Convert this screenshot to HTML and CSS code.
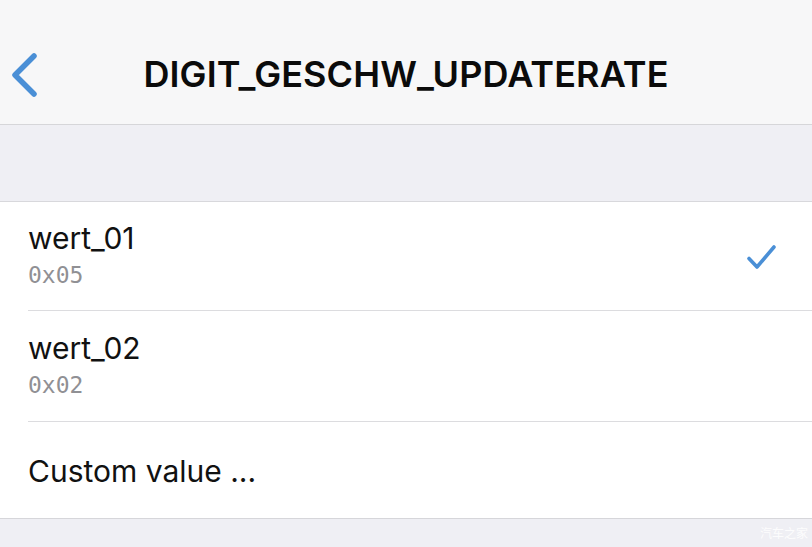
FILE: index.html
```html
<!DOCTYPE html>
<html>
<head>
<meta charset="utf-8">
<link rel="stylesheet" href="styles.css">
</head>
<body>
<div class="screen">
  <header class="navbar">
    <svg class="back" width="30" height="48" viewBox="0 0 30 48"><path d="M24 5 L5 24 L24 43" fill="none" stroke="#4a8fd6" stroke-width="5.5" stroke-linecap="round" stroke-linejoin="round"/></svg>
    <h1 class="title">DIGIT_GESCHW_UPDATERATE</h1>
  </header>
  <div class="gap"></div>
  <ul class="list">
    <li class="row">
      <div class="texts">
        <div class="name">wert_01</div>
        <div class="code">0x05</div>
      </div>
      <svg class="check" width="32" height="28" viewBox="0 0 32 28"><path d="M3 14.5 L11 23 L28 3" fill="none" stroke="#4a8fd6" stroke-width="3.6" stroke-linecap="round" stroke-linejoin="round"/></svg>
    </li>
    <li class="row">
      <div class="texts">
        <div class="name">wert_02</div>
        <div class="code">0x02</div>
      </div>
    </li>
    <li class="row custom">
      <div class="name">Custom value ...</div>
    </li>
  </ul>
  <div class="footer"><span class="wm">汽车之家</span></div>
</div>
</body>
</html>
```
FILE: styles.css
```css
html, body { margin: 0; padding: 0; }
body { width: 812px; height: 547px; overflow: hidden; background: #efeff4; font-family: Inter, "Noto Sans", sans-serif; }
.screen { display: flex; flex-direction: column; height: 547px; }
.navbar { position: relative; height: 124px; background: #f7f7f8; border-bottom: 1px solid #d6d6d9; display: flex; align-items: center; justify-content: center; flex-shrink: 0; }
.back { position: absolute; left: 10px; top: 51px; }
.title { margin: 0; font-size: 36px; font-weight: 600; color: #0b0b0b; letter-spacing: 0.1px; padding-top: 24px; }
.gap { height: 76px; flex-shrink: 0; }
.list { list-style: none; margin: 0; padding: 0 0 0 28px; background: #fff; border-top: 1px solid #d8d8dc; border-bottom: 1px solid #d6d6da; }
.row { display: flex; align-items: center; justify-content: space-between; height: 109px; border-bottom: 1px solid #dcdcdf; padding-right: 34px; box-sizing: border-box; }
.row:nth-child(2) { height: 111px; }
.row.custom { height: 96px; border-bottom: none; }
.texts { display: flex; flex-direction: column; gap: 4px; padding-bottom: 2px; }
.name { font-size: 30px; color: #111; line-height: 36px; }
.custom .name { padding-top: 2px; }
.code { font-family: "DejaVu Sans Mono", monospace; font-size: 23px; color: #909094; line-height: 30px; }
.check { margin-top: 4px; }
.footer { flex: 1; position: relative; }
.wm { position: absolute; right: 4px; bottom: 6px; font-family: "Noto Sans CJK SC", sans-serif; font-size: 12px; color: rgba(255,255,255,0.85); }
```
